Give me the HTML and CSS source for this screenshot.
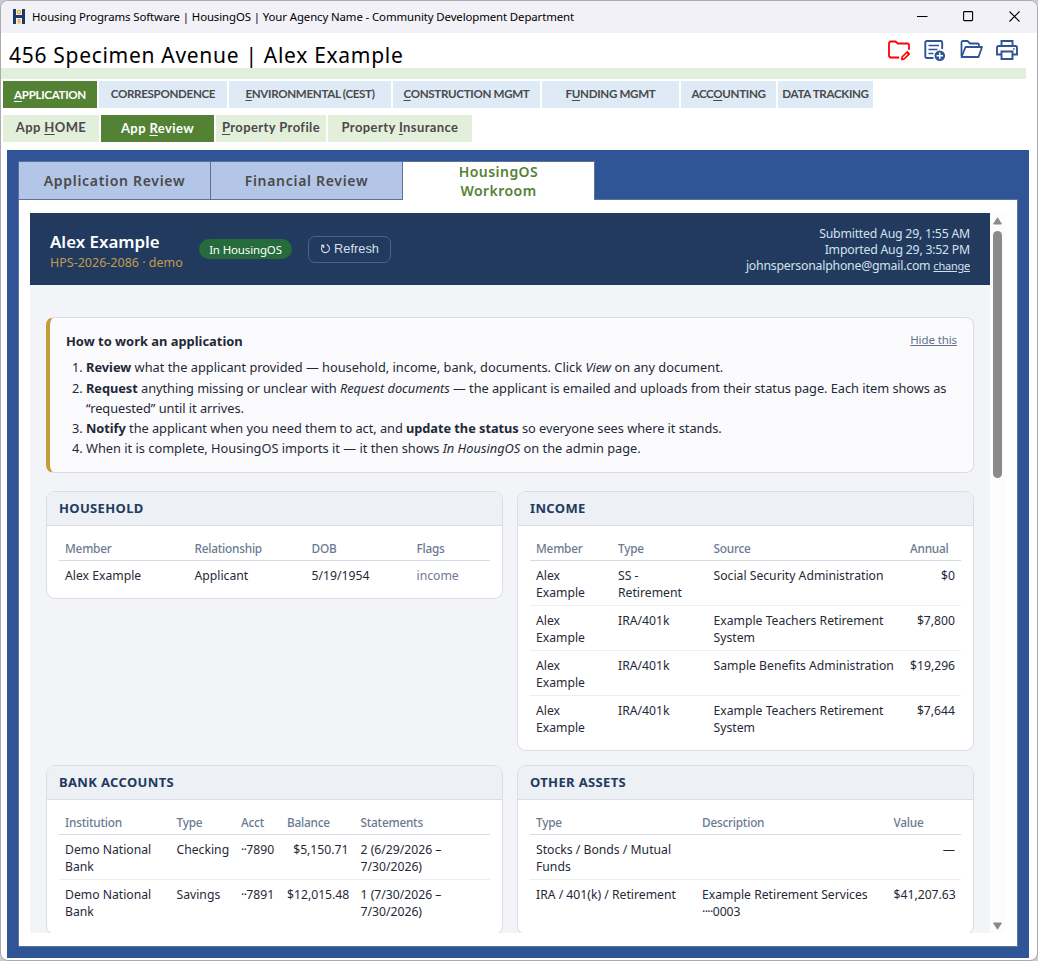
FILE: index.html
```html
<!DOCTYPE html>
<html lang="en">
<head>
<meta charset="utf-8">
<title>Housing Programs Software</title>
<link rel="stylesheet" href="styles.css">
</head>
<body>
<div class="window">
  <header class="titlebar">
    <svg class="logo" width="14" height="15" viewBox="0 0 14 15">
      <path d="M1 0h3v6h6V0h3v15h-3V9H4v6H1z" fill="#173a6c"/>
      <circle cx="7" cy="3" r="1.7" fill="none" stroke="#f0a92c" stroke-width="1.3"/>
      <path d="M8.7 10.6H6.2q-1 .9.2 1.5l1.4.3q1 .8 0 1.6H5.3" fill="none" stroke="#f0a92c" stroke-width="1.2"/>
    </svg>
    <span class="app-title">Housing Programs Software | HousingOS | Your Agency Name - Community Development Department</span>
    <div class="controls">
      <svg width="11" height="11" viewBox="0 0 11 11"><path d="M0 5.5h10.5" stroke="#000"/></svg>
      <svg width="11" height="11" viewBox="0 0 11 11"><rect x=".6" y=".6" width="9" height="9" rx=".8" fill="none" stroke="#000" stroke-width="1.1"/></svg>
      <svg width="11" height="11" viewBox="0 0 11 11"><path d="M.5.5l10 10M10.5.5l-10 10" stroke="#000" stroke-width="1.1"/></svg>
    </div>
  </header>

  <div class="record">
    <h1>456 Specimen Avenue | Alex Example</h1>
    <div class="tools">
      <svg width="23" height="21" viewBox="0 0 23 21" fill="none" stroke="#f00" stroke-width="1.8" stroke-linejoin="round" stroke-linecap="round">
        <path d="M10.500 17.500H2.300L1 16.200V2.800L2.300 1.500H7.500L9.800 3.500H19.800L21 4.700V9"/>
        <path d="M13.500 19.500l.5-3 5.200-5.200 2.600 2.600-5.300 5.300z" fill="#f00" stroke-width="1"/>
        <path d="M15.500 17.600l3.300-3.300" stroke="#fff" stroke-width="1.300"/>
      </svg>
      <svg width="22" height="22" viewBox="0 0 22 22" fill="none" stroke="#2f5597" stroke-width="1.900">
        <path d="M9.500 18H2.800A1.500 1.500 0 0 1 1.300 16.500V2.500A1.500 1.500 0 0 1 2.800 1H16.700a1.500 1.500 0 0 1 1.500 1.500V9"/>
        <path d="M4.500 5.500h10.500M4.500 9.500h9M4.500 13.500h5" stroke-width="1.500"/>
        <circle cx="15.800" cy="15.700" r="5.300" fill="#2f5597" stroke="none"/><path d="M15.800 12.500v6.400M12.600 15.700H19" stroke="#fff" stroke-width="1.400"/>
      </svg>
      <svg width="23" height="19" viewBox="0 0 23 19" fill="none" stroke="#2f5597" stroke-width="1.800" stroke-linejoin="round">
        <path d="M1.500 16V2.500Q1.500 1 3 1H7.500L10 3.500H17.500Q19 3.500 19 5V7"/>
        <path d="M1.500 17L5.500 7H22L18.500 17z"/>
      </svg>
      <svg width="22" height="20" viewBox="0 0 22 20" fill="none" stroke="#2f5597" stroke-width="1.900">
        <path d="M5.500 6V1H16.500V6M5.500 14.500H1V7.500A1.500 1.500 0 0 1 2.500 6H19.500A1.500 1.500 0 0 1 21 7.500V14.500H16.500"/>
        <path d="M5.500 11.500h11V19h-11z"/><path d="M17.200 9h1.500" stroke-width="1.500"/>
      </svg>
    </div>
  </div>

  <nav class="nav modules">
    <a class="w94 current"><u>A</u>PPLICATION</a>
    <a class="w128">CORRESPONDENCE</a>
    <a class="w162"><u>E</u>NVIRONMENTAL (CEST)</a>
    <a class="w147"><u>C</u>ONSTRUCTION MGMT</a>
    <a class="w137">F<u>U</u>NDING MGMT</a>
    <a class="w95">ACC<u>O</u>UNTING</a>
    <a class="w95">DATA TRACKING</a>
  </nav>
  <nav class="nav pages">
    <a class="w96">App <u>H</u>OME</a>
    <a class="w113 current">App <u>R</u>eview</a>
    <a class="w110"><u>P</u>roperty Profile</a>
    <a class="w144">Property <u>I</u>nsurance</a>
  </nav>

  <main class="frame">
    <div class="tabs">
      <div class="tab">Application Review</div>
      <div class="tab">Financial Review</div>
      <div class="tab active">HousingOS<br>Workroom</div>
    </div>
    <div class="sheet">
      <div class="view">
        <section class="applicant">
          <div class="who">
            <h2>Alex Example</h2>
            <p>HPS-2026-2086 · demo</p>
          </div>
          <span class="badge">In HousingOS</span>
          <button class="refresh"><svg width="11" height="11" viewBox="0 0 11 11" fill="none" stroke="#d6e0ee" stroke-width="1.100"><path d="M3.200 2.300A4 4 0 1 0 8 2.500M1 2.300H3.700V5M8 2.500L6.800 1.300"/></svg> <span>Refresh</span></button>
          <div class="meta">
            <p>Submitted Aug 29, 1:55 AM</p>
            <p>Imported Aug 29, 3:52 PM</p>
            <p>johnspersonalphone@gmail.com <a class="change">change</a></p>
          </div>
        </section>

        <section class="guide">
          <div class="guide-head"><h3>How to work an application</h3><a>Hide this</a></div>
          <ol>
            <li><b>Review</b> what the applicant provided — household, income, bank, documents. Click <i>View</i> on any document.</li>
            <li class="tight"><b>Request</b> anything missing or unclear with <i>Request documents</i> — the applicant is emailed and uploads from their status page. Each item shows as “requested” until it arrives.</li>
            <li class="tight"><b>Notify</b> the applicant when you need them to act, and <b>update the status</b> so everyone sees where it stands.</li>
            <li>When it is complete, HousingOS imports it — it then shows <i>In HousingOS</i> on the admin page.</li>
          </ol>
        </section>

        <div class="cards">
          <section class="card">
            <h4>HOUSEHOLD</h4>
            <table class="household">
              <thead><tr><th>Member</th><th>Relationship</th><th>DOB</th><th>Flags</th></tr></thead>
              <tbody><tr><td>Alex Example</td><td>Applicant</td><td>5/19/1954</td><td class="muted">income</td></tr></tbody>
            </table>
          </section>
          <section class="card">
            <h4>INCOME</h4>
            <table class="income">
              <thead><tr><th>Member</th><th>Type</th><th>Source</th><th>Annual</th></tr></thead>
              <tbody>
                <tr><td>Alex Example</td><td>SS - Retirement</td><td>Social Security Administration</td><td class="num">$0</td></tr>
                <tr><td>Alex Example</td><td>IRA/401k</td><td>Example Teachers Retirement System</td><td class="num">$7,800</td></tr>
                <tr><td>Alex Example</td><td>IRA/401k</td><td>Sample Benefits Administration</td><td class="num">$19,296</td></tr>
                <tr><td>Alex Example</td><td>IRA/401k</td><td>Example Teachers Retirement System</td><td class="num">$7,644</td></tr>
              </tbody>
            </table>
          </section>
          <section class="card">
            <h4>BANK ACCOUNTS</h4>
            <table class="bank">
              <thead><tr><th>Institution</th><th>Type</th><th>Acct</th><th>Balance</th><th>Statements</th></tr></thead>
              <tbody>
                <tr><td>Demo National Bank</td><td>Checking</td><td><span class="dots">··</span>7890</td><td class="num">$5,150.71</td><td>2 (6/29/2026 – 7/30/2026)</td></tr>
                <tr><td>Demo National Bank</td><td>Savings</td><td><span class="dots">··</span>7891</td><td class="num">$12,015.48</td><td>1 (7/30/2026 – 7/30/2026)</td></tr>
              </tbody>
            </table>
          </section>
          <section class="card">
            <h4>OTHER ASSETS</h4>
            <table class="assets">
              <thead><tr><th>Type</th><th>Description</th><th>Value</th></tr></thead>
              <tbody>
                <tr><td>Stocks / Bonds / Mutual Funds</td><td></td><td class="num">—</td></tr>
                <tr><td>IRA / 401(k) / Retirement</td><td>Example Retirement Services <span class="dots">····</span>0003</td><td class="num">$41,207.63</td></tr>
              </tbody>
            </table>
          </section>
        </div>
      </div>
      <div class="scrollbar">
        <svg width="9" height="8" viewBox="0 0 9 8"><path d="M4.500.8L8.400 7H.6z" fill="#8a8a8a" stroke="#8a8a8a" stroke-linejoin="round"/></svg>
        <div class="track"><div class="thumb"></div></div>
        <svg width="9" height="8" viewBox="0 0 9 8"><path d="M4.500 7.200L.6 1h7.800z" fill="#8a8a8a" stroke="#8a8a8a" stroke-linejoin="round"/></svg>
      </div>
    </div>
  </main>
</div>
</body>
</html>
```

FILE: styles.css
```css
* { box-sizing: border-box; }
body, h1, h2, h3, h4, p, ol { margin: 0; }
body {
  height: 961px;
  overflow: hidden;
  background: #c9cbd1;
  font-family: "Noto Sans", "Open Sans", sans-serif;
  color: #1f2937;
}
.window {
  display: flex;
  flex-direction: column;
  width: 1038px;
  height: 961px;
  border: 1px solid #a9a9ae;
  border-radius: 8px;
  background: #fff;
  overflow: hidden;
}

/* Title bar */
.titlebar {
  display: flex;
  align-items: center;
  height: 32px;
  padding: 0 17px 2px 11px;
  background: #f1f1f7;
  color: #000;
}
.app-title { margin-left: 6px; font-size: 11.4px; letter-spacing: -.1px; white-space: nowrap; }
.controls { display: flex; gap: 35px; margin-left: auto; }

/* Record heading */
.record {
  display: flex;
  justify-content: space-between;
  width: 1025px;
  height: 46px;
  padding: 0 8px 0 8px;
  border-bottom: 11px solid #e2efda;
  color: #000;
}
.record h1 { font-size: 21px; font-weight: 400; line-height: 44px; letter-spacing: .7px; white-space: nowrap; }
.tools { display: flex; gap: 13.3px; padding-top: 7px; }

/* Navigation rows */
.nav { display: flex; gap: 2px; height: 27px; padding-left: 2px; font-family: Lato, sans-serif; font-weight: 700; color: #4a4a4a; }
.nav a { text-align: center; white-space: nowrap; line-height: 26px; }
.nav u { text-underline-offset: 2px; text-decoration-thickness: 1px; }
.modules { margin-top: 2px; font-size: 11.6px; letter-spacing: -.33px; }
.modules a { background: #deeaf6; }
.pages { margin-top: 7px; font-size: 13px; letter-spacing: .4px; }
.pages a { background: #e2efda; line-height: 25px; }
.modules .current { line-height: 28px; }
.pages .current { line-height: 27px; }
.nav .current { background: #548235; color: #fff; }
.w94 { width: 94px; } .w95 { width: 95px; } .w96 { width: 96px; }
.w110 { width: 110px; } .w113 { width: 113px; } .w128 { width: 128px; }
.w137 { width: 137px; } .w144 { width: 144px; } .w147 { width: 147px; } .w162 { width: 162px; }

/* Blue frame, tabs and sheet */
.frame { width: 1022px; height: 808px; margin: 8px 0 0 6px; padding: 11px; background: #2f5597; }
.tabs { display: flex; width: 577px; height: 38px; border: 1px solid #5b7398; border-bottom: 0; }
.tab {
  display: flex;
  align-items: center;
  justify-content: center;
  flex: 1;
  background: #b4c6e7;
  color: #4a4a4a;
  font-size: 14px;
  font-weight: 600;
  line-height: 19px;
  letter-spacing: .7px;
  text-align: center;
}
.tab + .tab { border-left: 1px solid #5b7398; }
.tab.active { position: relative; height: 38px; background: #fff; color: #548235; letter-spacing: .45px; }
.sheet { display: flex; width: 1000px; height: 748px; padding: 13px 0 0 11px; border: 1px solid #5b7398; background: #fff; }
.view { width: 960px; height: 720px; overflow: hidden; background: #f2f4f8; }
.scrollbar { display: flex; flex-direction: column; align-items: center; width: 15px; height: 720px; padding: 4px 0 3px; background: #fcfcfd; }
.track { flex: 1; width: 9px; padding-top: 6px; }
.thumb { height: 247px; border-radius: 5px; background: #8a8a8a; }

/* Applicant banner */
.applicant { display: flex; align-items: center; height: 72px; padding: 0 20px; background: #213a5e; color: #d6e0ee; }
.who { width: 149px; padding-top: 5px; }
.who h2 { font-size: 16.9px; line-height: 22px; font-weight: 600; color: #fff; white-space: nowrap; }
.who p { font-size: 12.5px; line-height: 19px; color: #c39b4d; white-space: nowrap; }
.badge { width: 93px; height: 20px; border-radius: 10px; background: #256b3c; color: #fff; font-size: 11.5px; letter-spacing: -.15px; line-height: 21px; text-align: center; }
.refresh {
  display: flex;
  align-items: center;
  justify-content: center;
  gap: 3px;
  width: 83px;
  height: 27px;
  margin-left: 16px;
  padding: 0 0 2px;
  border: 1px solid #49658d;
  border-radius: 7px;
  background: none;
  color: #d6e0ee;
  font: 12.8px "Liberation Sans", sans-serif;
}
.meta { margin-left: auto; padding-top: 2px; text-align: right; font-size: 12.3px; letter-spacing: -.23px; line-height: 16px; white-space: nowrap; }
.change { font-size: 11px; text-decoration: underline; }

/* How-to card */
.guide {
  height: 156px;
  margin: 32px 16px 0;
  padding: 13px 16px;
  border: 1px solid #d9dde5;
  border-left: 4px solid #c79a3a;
  border-radius: 8px;
  background: #fbfbfd;
  font-size: 12.8px;
  line-height: 20.2px;
}
.guide-head { display: flex; justify-content: space-between; margin-bottom: 6.4px; }
.guide h3 { font-size: 12.9px; font-weight: 700; line-height: 20px; }
.guide-head a { font-size: 11.5px; letter-spacing: -.1px; line-height: 18px; color: #65728a; text-decoration: underline; }
.guide ol { padding-left: 20px; }
.tight { letter-spacing: -.045px; }

/* Data cards */
.cards { display: grid; grid-template-columns: 457px 457px; gap: 14px; align-items: start; margin: 18px 16px 0; }
.card { padding-bottom: 10px; border: 1px solid #d9dde5; border-radius: 9px; background: #fff; overflow: hidden; }
.card h4 {
  height: 34px;
  margin-bottom: 10px;
  padding-left: 12px;
  border-bottom: 1px solid #d9dde5;
  background: #edf0f5;
  color: #213a5e;
  font-size: 13px;
  line-height: 33px;
  letter-spacing: .35px;
}
table { width: 431px; margin: 0 12px; border-spacing: 0; table-layout: fixed; font-size: 12.2px; line-height: 17px; }
th { height: 25px; padding: 0 6px; border-bottom: 1px solid #d5dae3; color: #6b7a90; font-size: 11.8px; letter-spacing: -.22px; font-weight: 500; text-align: left; }
td { padding: 6px 6px 4px; border-bottom: 1px solid #eceef2; vertical-align: top; }
tr:last-child td { border-bottom: 0; }
.num { text-align: right; white-space: nowrap; }
.muted { color: #6b7a90; }
.dots { letter-spacing: -.6px; }
.household th:nth-child(1) { width: 129.5px; }
.household th:nth-child(2) { width: 117px; }
.household th:nth-child(3) { width: 105px; }
.income th:nth-child(1) { width: 82px; }
.income th:nth-child(2) { width: 95.5px; }
.income th:nth-child(3) { width: 196.5px; }
.bank th:nth-child(1) { width: 111.5px; }
.bank th:nth-child(2) { width: 64.5px; }
.bank th:nth-child(3) { width: 46px; }
.bank th:nth-child(4) { width: 73.5px; }
.assets th:nth-child(1) { width: 166px; }
.assets th:nth-child(2) { width: 191.5px; }
```
